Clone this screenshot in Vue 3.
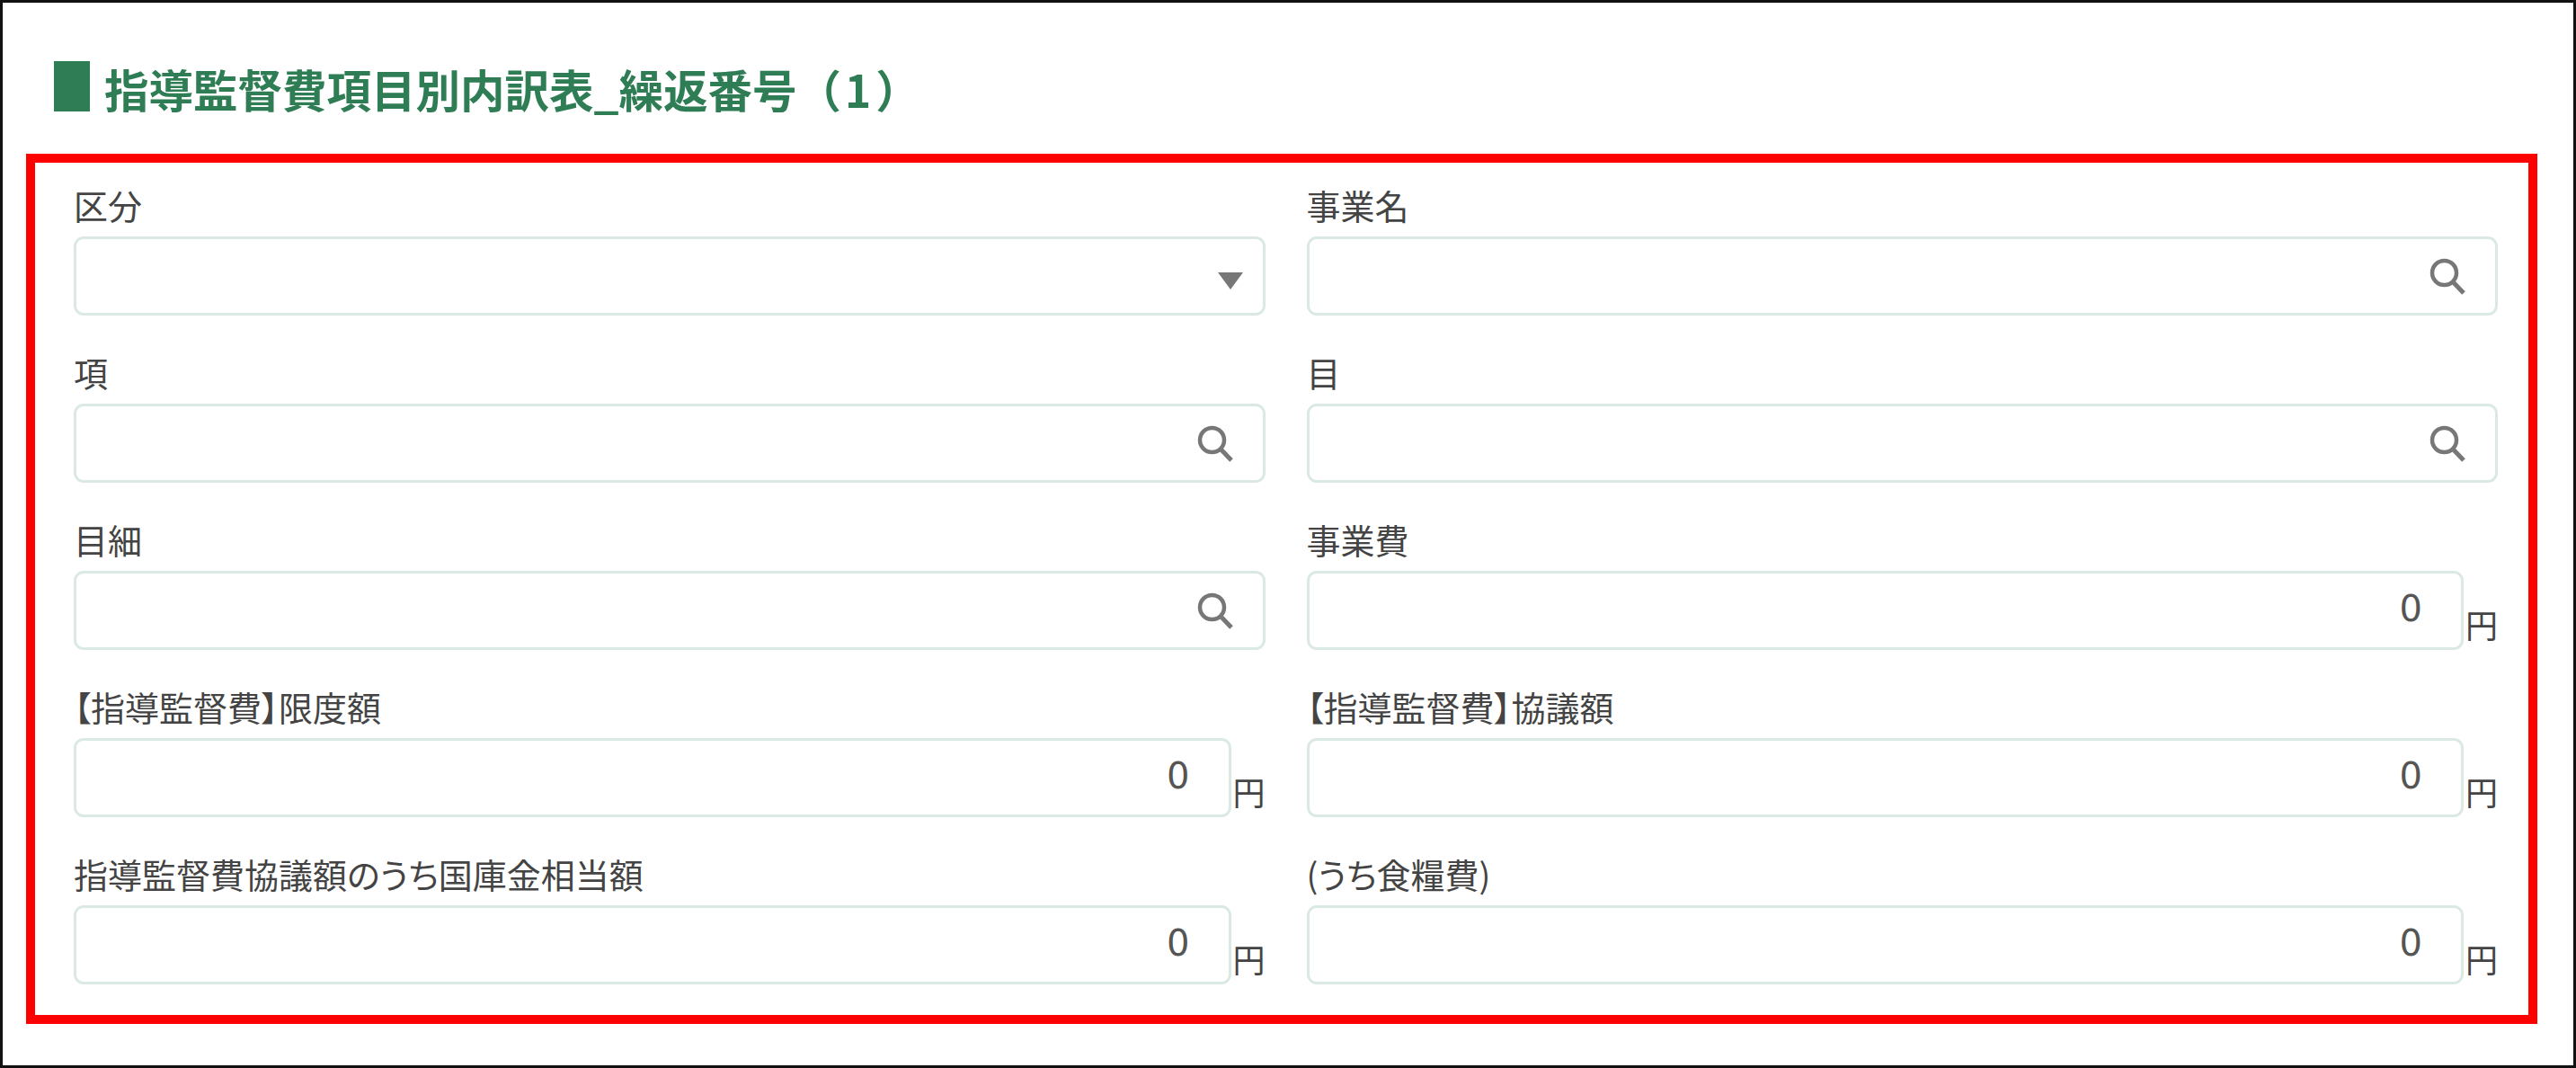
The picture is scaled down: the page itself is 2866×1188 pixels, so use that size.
<script setup>
const fields = [
  { label: '区分', type: 'select' },
  { label: '事業名', type: 'search' },
  { label: '項', type: 'search' },
  { label: '目', type: 'search' },
  { label: '目細', type: 'search' },
  { label: '事業費', type: 'yen' },
  { label: '【指導監督費】限度額', type: 'yen' },
  { label: '【指導監督費】協議額', type: 'yen' },
  { label: '指導監督費協議額のうち国庫金相当額', type: 'yen' },
  { label: '(うち食糧費)', type: 'yen' },
]
</script>

<template>
  <div class="page">
    <h2 class="heading">
      <span class="heading-mark"></span>
      <span class="heading-text">指導監督費項目別内訳表_繰返番号（<span class="heading-no">1</span>）</span>
    </h2>

    <div class="highlight">
      <div v-for="f in fields" :key="f.label" class="field">
        <label class="field-label">{{ f.label }}</label>
        <div class="field-row">
          <div class="box" :class="{ num: f.type === 'yen' }">
            <template v-if="f.type === 'yen'">0</template>
            <span v-else-if="f.type === 'select'" class="caret"></span>
            <svg v-else class="search" viewBox="0 0 40 42" fill="none" stroke="#777" stroke-width="4.5">
              <circle cx="16.5" cy="16.5" r="13.5" />
              <line x1="26.5" y1="27" x2="38" y2="39" stroke-width="5" />
            </svg>
          </div>
          <span v-if="f.type === 'yen'" class="unit">円</span>
        </div>
      </div>
    </div>
  </div>
</template>

<style>
body { background: #fff; }
</style>

<style scoped>
.page {
  box-sizing: border-box;
  width: 2866px;
  height: 1188px;
  border: 3px solid #111;
  background: #fff;
  padding: 65px 0 0 26px;
  font-family: "Noto Sans", "Noto Sans CJK JP", sans-serif;
  color: #444;
}

.heading {
  display: flex;
  align-items: flex-start;
  gap: 16px;
  height: 56px;
  margin: 0 0 47px 31px;
  font-family: "Noto Sans CJK JP", sans-serif;
  font-size: 49.5px;
  font-weight: 700;
  line-height: 56px;
  color: #2e7d54;
}
.heading-mark {
  width: 40px;
  height: 56px;
  background: #2e7d54;
}
.heading-text {
  padding-top: 3px;
}
.heading-no {
  margin: 0 5px 0 4px;
}

.highlight {
  box-sizing: border-box;
  width: 2794px;
  border: 10px solid #f00;
  padding: 24px 34px 34px 43px;
  display: grid;
  grid-template-columns: 1fr 1fr;
  column-gap: 46px;
  row-gap: 40px;
}

.field-label {
  display: block;
  height: 50px;
  margin-bottom: 8px;
  font-family: "Noto Sans CJK JP", sans-serif;
  font-feature-settings: "palt";
  font-size: 38px;
  line-height: 46px;
  white-space: nowrap;
}

.field-row {
  display: flex;
  align-items: flex-end;
}

.box {
  box-sizing: border-box;
  position: relative;
  flex: 1;
  height: 88px;
  border: 3px solid #dbe9e3;
  border-radius: 11px;
  background: #fff;
}
.box.num {
  padding-right: 43px;
  text-align: right;
  font-family: "DejaVu Sans", sans-serif;
  font-size: 40px;
  line-height: 78px;
  color: #555;
}

.caret {
  position: absolute;
  right: 22px;
  top: 37px;
  border-left: 14px solid transparent;
  border-right: 14px solid transparent;
  border-top: 19px solid #777;
}

.search {
  position: absolute;
  right: 33px;
  top: 21px;
  width: 40px;
  height: 42px;
}

.unit {
  width: 38px;
  margin-bottom: 4px;
  text-align: right;
  font-family: "Noto Sans CJK JP", sans-serif;
  font-size: 36px;
  line-height: 50px;
}
</style>
